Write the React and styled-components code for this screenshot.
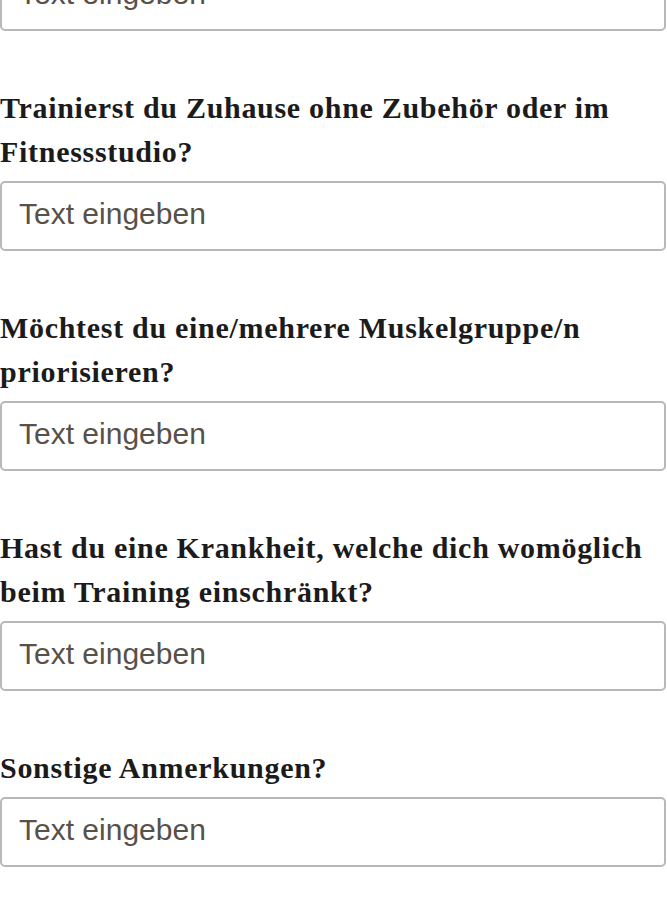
import React from "react";
import styled, { createGlobalStyle } from "styled-components";

const Global = createGlobalStyle`
  html, body {
    margin: 0;
    padding: 0;
    background: #ffffff;
  }
  * { box-sizing: border-box; }
`;

const Form = styled.form`
  display: flex;
  flex-direction: column;
  margin-top: -39px;
  padding: 0 1px 0 0;
`;

const Field = styled.div`
  display: flex;
  flex-direction: column;
  gap: 7px;
  margin-bottom: 55px;
`;

const Question = styled.label`
  font-family: "Liberation Serif", "DejaVu Serif", serif;
  font-weight: 700;
  font-size: 30px;
  letter-spacing: 0.7px;
  line-height: 44px;
  color: #1b1b1b;
  margin: 0;
`;

const TextInput = styled.input`
  display: block;
  width: 100%;
  height: 70px;
  margin: 0;
  padding: 0 18px 4px 17px;
  border: 2px solid #b8b8b8;
  border-radius: 5px;
  background: #ffffff;
  font-family: "Liberation Sans", Arial, sans-serif;
  font-size: 30px;
  color: #333;
  outline: none;

  &::placeholder {
    color: #57514a;
    opacity: 1;
  }
`;

const questions = [
  null,
  "Trainierst du Zuhause ohne Zubehör oder im Fitnessstudio?",
  "Möchtest du eine/mehrere Muskelgruppe/n priorisieren?",
  "Hast du eine Krankheit, welche dich womöglich beim Training einschränkt?",
  "Sonstige Anmerkungen?",
];

export default function App() {
  return (
    <>
      <Global />
      <Form onSubmit={(e) => e.preventDefault()}>
        {questions.map((q, i) => (
          <Field key={i}>
            {q && <Question htmlFor={`f${i}`}>{q}</Question>}
            <TextInput id={`f${i}`} type="text" placeholder="Text eingeben" />
          </Field>
        ))}
      </Form>
    </>
  );
}
